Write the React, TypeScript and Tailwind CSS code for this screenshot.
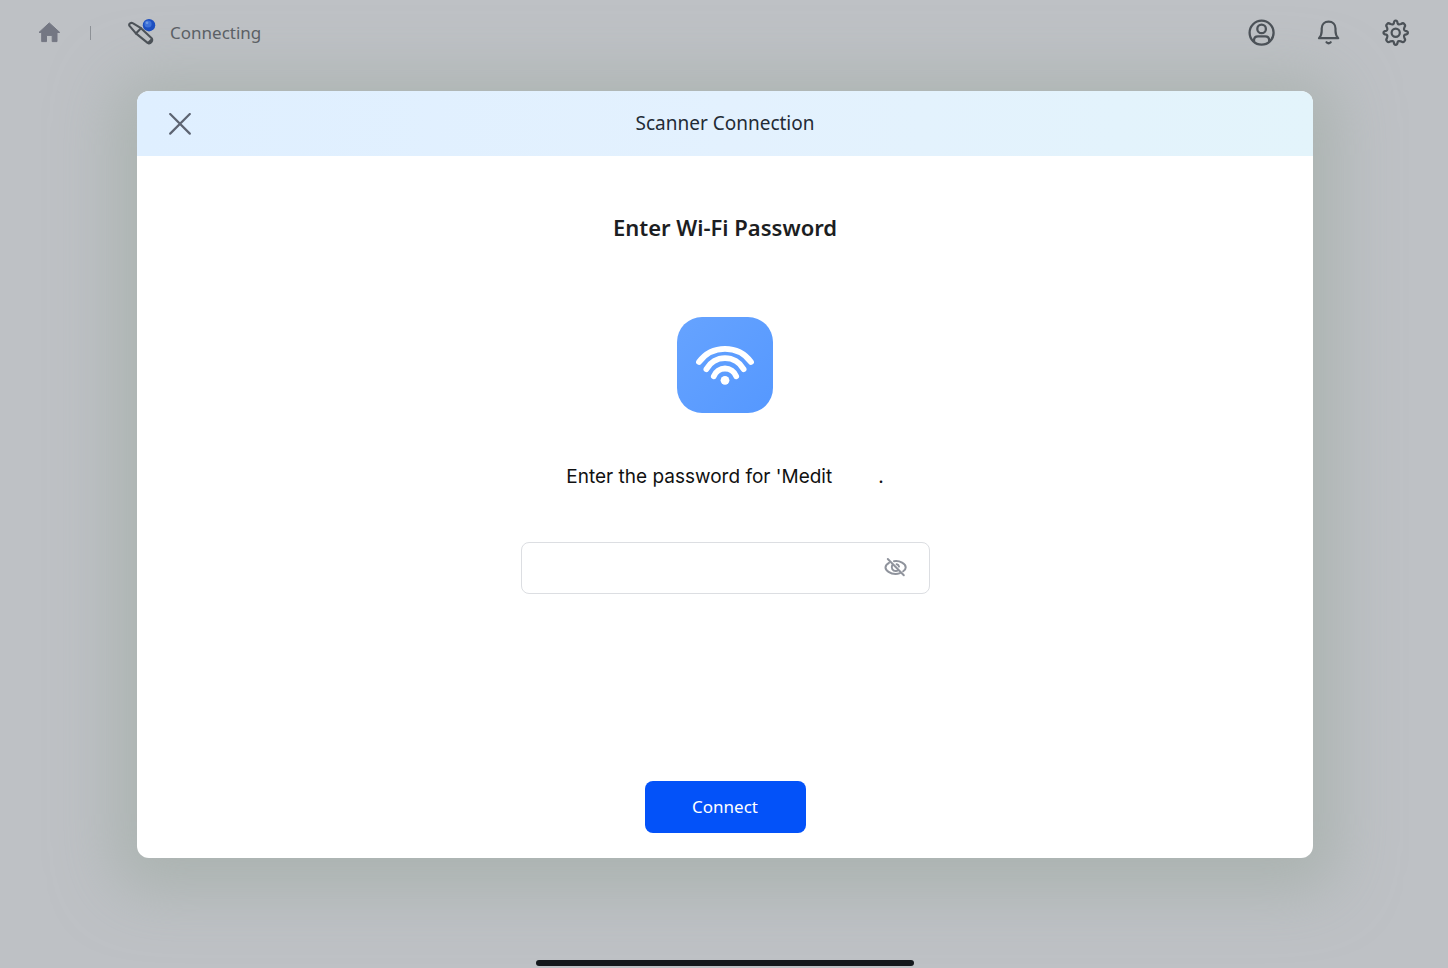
import { useState } from 'react'
import type { ReactNode } from 'react'

interface IconButtonProps {
  label: string
  children: ReactNode
}

function IconButton({ label, children }: IconButtonProps) {
  return (
    <button type="button" aria-label={label} className="flex shrink-0 text-[#4c5258]">
      {children}
    </button>
  )
}

function HomeIcon() {
  return (
    <svg viewBox="0 0 26 26" className="size-[26px]" fill="currentColor" stroke="currentColor" strokeLinejoin="round">
      <path d="M13.3 2.9 L23.7 12.4 H21 V21.6 H16.2 V15.4 H10.5 V21.6 H5.7 V12.4 H3 Z" />
    </svg>
  )
}

function ScannerIcon() {
  return (
    <svg viewBox="0 0 28 28" className="size-7" fill="none">
      <g stroke="#4c5258" strokeWidth="2.1" strokeLinejoin="round" strokeLinecap="round">
        <path d="M1.3 6.6 C0.6 5 3 3.1 4.7 4.2 L13 9.2 L23.4 18.9 C25.6 21.6 22.4 25.4 19.6 23.9 L7.9 14.4 Z" />
        <path d="M7.9 14.4 L13 9.2" />
        <path d="M20.8 23.8 L23.6 21" strokeWidth="2.8" />
      </g>
      <circle cx="21" cy="6.2" r="6.2" fill="#1d4fc0" />
      <circle cx="20" cy="5" r="3.6" fill="#3f72d8" />
      <circle cx="19" cy="3.8" r="1.4" fill="#7099e2" />
    </svg>
  )
}

function UserIcon() {
  return (
    <svg viewBox="0 0 28 28" className="size-7" fill="none" stroke="currentColor" strokeWidth="2.3">
      <circle cx="13.6" cy="13.7" r="12" />
      <circle cx="13.6" cy="9.9" r="4.3" />
      <path d="M6 22.9 V21.4 Q6 17.4 10 17.4 H17.2 Q21.2 17.4 21.2 21.4 V22.9" />
    </svg>
  )
}

function BellIcon() {
  return (
    <svg viewBox="0 0 28 28" className="size-7" fill="none" stroke="currentColor" strokeWidth="2.2" strokeLinecap="round" strokeLinejoin="round">
      <path d="M4 19.2 H23.2 C21.2 17.2 20.5 14.8 20.5 12 V9.6 C20.5 5.4 17.6 2.7 13.6 2.7 C9.6 2.7 6.7 5.4 6.7 9.6 V12 C6.7 14.8 6 17.2 4 19.2 Z" />
      <path d="M11.5 23.2 Q13.6 25.3 15.7 23.2" />
    </svg>
  )
}

function GearIcon() {
  return (
    <svg viewBox="0 0 28 28" className="size-7" fill="none" stroke="currentColor" strokeWidth="2.2" strokeLinejoin="round">
      <g transform="translate(-0.3 -0.3)">
        <circle cx="14" cy="14" r="4.1" />
        <path d="M12.1 4.6 Q12.3 1.8 14 1.8 Q15.7 1.8 15.9 4.6 Q16.5 6.3 19.3 5.3 Q21.4 3.8 22.6 5.4 Q24.2 6.6 22.7 8.7 Q21.7 11.5 23.4 12.1 Q26.2 12.3 26.2 14 Q26.2 15.7 23.4 15.9 Q21.7 16.5 22.7 19.3 Q24.2 21.4 22.6 22.6 Q21.4 24.2 19.3 22.7 Q16.5 21.7 15.9 23.4 Q15.7 26.2 14 26.2 Q12.3 26.2 12.1 23.4 Q11.5 21.7 8.7 22.7 Q6.6 24.2 5.4 22.6 Q3.8 21.4 5.3 19.3 Q6.3 16.5 4.6 15.9 Q1.8 15.7 1.8 14 Q1.8 12.3 4.6 12.1 Q6.3 11.5 5.3 8.7 Q3.8 6.6 5.4 5.4 Q6.6 3.8 8.7 5.3 Q11.5 6.3 12.1 4.6 Z" />
      </g>
    </svg>
  )
}

function WifiTile() {
  return (
    <svg viewBox="0 0 96 96" className="size-24 shrink-0" fill="none">
      <defs>
        <linearGradient id="tile" x1="0" y1="0" x2="1" y2="1">
          <stop offset="0" stopColor="#66a3ff" />
          <stop offset="1" stopColor="#5598ff" />
        </linearGradient>
      </defs>
      <rect width="96" height="96" rx="25" fill="url(#tile)" />
      <g stroke="#fff" strokeWidth="5.8" strokeLinecap="round">
        <path d="M22 45 A32.4 32.4 0 0 1 74 45" />
        <path d="M29.4 52.1 A21.2 21.2 0 0 1 66.6 52.1" />
        <path d="M36.8 59.2 A12 12 0 0 1 59.2 59.2" />
      </g>
      <circle cx="48" cy="63.3" r="4.4" fill="#fff" />
    </svg>
  )
}

function EyeOffIcon() {
  return (
    <svg viewBox="0 0 24 24" className="size-6" fill="none" stroke="currentColor" strokeWidth="2" strokeLinecap="round">
      <path d="M3.8 3 L19.8 19.2" />
      <path d="M5 6.8 C2.6 8.2 1.5 10 1.5 11.4 C1.5 14.6 6.2 17.9 11.6 17.9 C13.4 17.9 14.6 17.6 16 17.1" />
      <path d="M10 5.2 C16 4.2 21.7 8 21.7 11.4 C21.7 12.9 20.9 14.1 19.2 15.3" />
      <path d="M8.2 9.2 C6.8 12.2 8.8 15.2 11.8 15.1 C12.8 15.1 13.4 14.8 14.1 14.2" />
      <path d="M12.6 8.2 C14 8.5 14.8 9.4 15 10.6" />
    </svg>
  )
}

export default function App() {
  const [password, setPassword] = useState('')
  const [visible, setVisible] = useState(false)

  return (
    <div className="flex min-h-screen flex-col overflow-hidden bg-[#bec1c5] font-['Noto_Sans',sans-serif]">
      <header className="relative z-10 flex h-[66px] shrink-0 items-center justify-between pl-9 pr-[38px]">
        <div className="flex items-center">
          <button type="button" aria-label="Home" className="text-[#747783]">
            <HomeIcon />
          </button>
          <div className="ml-7 h-[14px] w-px bg-[#8d9196]" />
          <div className="ml-[37px] flex items-center gap-[14px]">
            <ScannerIcon />
            <span className="text-[17px] leading-6 text-[#5b6065]">Connecting</span>
          </div>
        </div>
        <nav className="flex items-center gap-[39px]">
          <IconButton label="Account"><UserIcon /></IconButton>
          <IconButton label="Notifications"><BellIcon /></IconButton>
          <IconButton label="Settings"><GearIcon /></IconButton>
        </nav>
      </header>

      <main className="flex flex-1 flex-col pt-[25px] pr-[135px] pl-[137px]">
        <section
          role="dialog"
          aria-labelledby="dialog-title"
          className="flex flex-1 flex-col rounded-xl bg-white shadow-[0_10px_60px_24px_rgba(162,172,166,0.65)]"
        >
          <div className="grid h-[65px] shrink-0 grid-cols-[1fr_auto_1fr] items-center rounded-t-xl bg-linear-to-r from-[#dfefff] via-[#e3f1fe] to-[#e3f4fb] px-8">
            <button type="button" aria-label="Close" className="justify-self-start text-[#5d6472]">
              <svg viewBox="0 0 22 22" className="size-[22px]" fill="none" stroke="currentColor" strokeWidth="2.2" strokeLinecap="round">
                <path d="M1.2 1 L20.8 20.6 M20.8 1 L1.2 20.6" />
              </svg>
            </button>
            <h1 id="dialog-title" className="text-[19px] text-[#232b35]">Scanner Connection</h1>
          </div>

          <form
            className="flex flex-1 flex-col items-center pt-14 pb-[25px]"
            onSubmit={(e) => { e.preventDefault() }}
          >
            <h2 className="text-[22px] leading-[30px] font-semibold text-[#1c1e22]">Enter Wi-Fi Password</h2>
            <div className="mt-[75px]">
              <WifiTile />
            </div>
            <label
              htmlFor="wifi-password"
              className="mt-12 flex font-['Inter',sans-serif] text-[19px] leading-8 text-[#111111]"
            >
              <span>Enter the password for 'Medit</span>
              <span className="ml-[46px]">.</span>
            </label>
            <div className="mt-[49px] flex h-[52px] w-[409px] items-center rounded-lg border border-[#dcdee2] pr-[21px] pl-4">
              <input
                id="wifi-password"
                type={visible ? 'text' : 'password'}
                value={password}
                onChange={(e) => { setPassword(e.target.value) }}
                className="h-full min-w-0 flex-1 bg-transparent text-[17px] outline-none"
              />
              <button
                type="button"
                aria-label="Toggle password visibility"
                onClick={() => { setVisible(!visible) }}
                className="text-[#8f939c]"
              >
                <EyeOffIcon />
              </button>
            </div>
            <button type="submit" className="mt-auto h-[52px] w-[161px] rounded-lg bg-[#0352f9] text-[17px] text-white">
              Connect
            </button>
          </form>
        </section>

        {/* Home indicator */}
        <div className="relative flex h-[110px] shrink-0 items-end justify-center pb-[2px]">
          <div className="h-[6px] w-[378px] rounded-full bg-[#15181c]" />
        </div>
      </main>
    </div>
  )
}
